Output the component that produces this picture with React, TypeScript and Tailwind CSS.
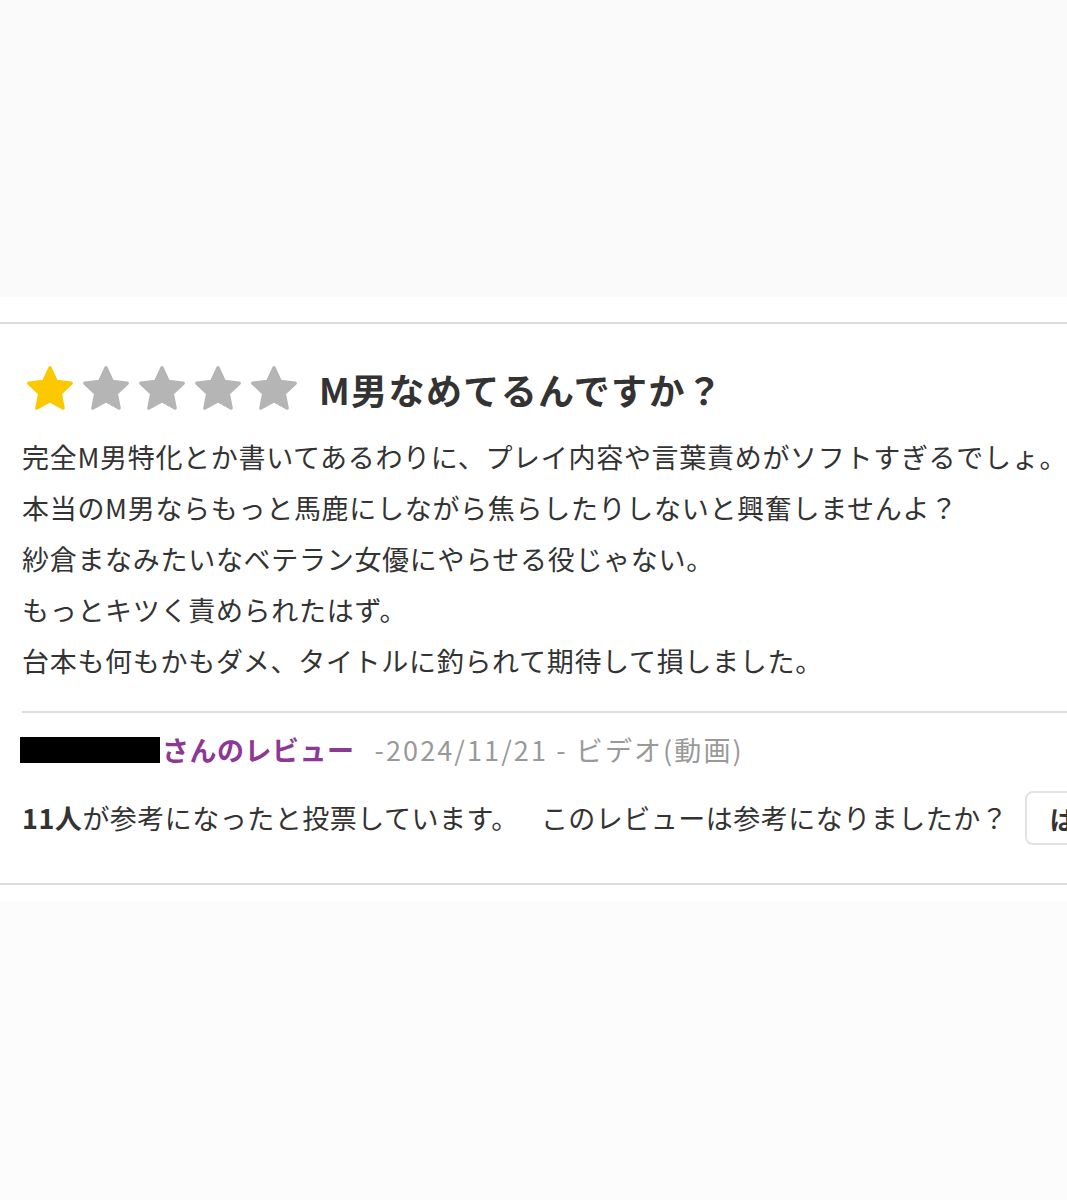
import React from 'react';

const Star: React.FC<{ filled: boolean }> = ({ filled }) => (
  <svg viewBox="0 0 24 24" className="w-[50px] h-[50px]" aria-hidden="true">
    <path
      d="M12 1.8l3.05 6.55 7.15.85-5.28 4.92 1.4 7.08L12 17.65 5.68 21.2l1.4-7.08L1.8 9.2l7.15-.85z"
      fill={filled ? '#fcc800' : '#b5b5b5'}
      stroke={filled ? '#fcc800' : '#b5b5b5'}
      strokeWidth="1.6"
      strokeLinejoin="round"
    />
  </svg>
);

const lines = [
  '完全M男特化とか書いてあるわりに、プレイ内容や言葉責めがソフトすぎるでしょ。',
  '本当のM男ならもっと馬鹿にしながら焦らしたりしないと興奮しませんよ？',
  '紗倉まなみたいなベテラン女優にやらせる役じゃない。',
  'もっとキツく責められたはず。',
  '台本も何もかもダメ、タイトルに釣られて期待して損しました。',
];

export default function App() {
  return (
    <div
      className="w-[1067px] h-[1200px] overflow-hidden bg-[#fcfcfc] text-[#333]"
      style={{ fontFamily: '"Noto Sans CJK JP", "Noto Sans", sans-serif' }}
    >
      <div className="h-[297px] bg-[#fafafa]" />
      <div className="bg-white h-[604px] pt-[25px] whitespace-nowrap">
        <div className="h-[2px] bg-[#dcdcdc]" />
        <div className="pl-[22px] pt-[40px]">
          <div className="flex items-center h-[50px]">
            <div className="flex gap-[6px] ml-[3px]">
              {[true, false, false, false, false].map((f, i) => (
                <Star key={i} filled={f} />
              ))}
            </div>
            <h2 className="ml-[20px] text-[36px] font-bold text-[#333] leading-none tracking-[1.4px]">M男なめてるんですか？</h2>
          </div>
          <div className="mt-[17px] text-[27px] leading-[51px] tracking-[0.7px]">
            {lines.map(l => (
              <p key={l}>{l}</p>
            ))}
          </div>
          <div className="mt-[25px] h-[2px] bg-[#e0e0e0]" />
          <div className="flex items-center h-[26px] mt-[24px] -ml-[2px]">
            <span className="inline-block w-[140px] h-[26px] bg-black" />
            <span className="ml-[2px] text-[27px] font-bold text-[#8e3896] tracking-[0.5px]">さんのレビュー</span>
            <span className="ml-[20px] text-[27px] text-[#999] tracking-[2.1px]">-2024/11/21 - ビデオ(動画)</span>
          </div>
          <div className="flex items-center mt-[28px] text-[27px] tracking-[0.5px]">
            <span className="font-bold">11人</span>
            <span>が参考になったと投票しています。</span>
            <span className="ml-[22px]">このレビューは参考になりましたか？</span>
            <span className="ml-[17px] inline-flex items-center h-[54px] px-[22px] border-2 border-[#e2e2e2] rounded-[8px] font-bold text-[26px]">
              はい
            </span>
          </div>
        </div>
        <div className="mt-[38px] h-[2px] bg-[#dcdcdc]" />
      </div>
    </div>
  );
}
